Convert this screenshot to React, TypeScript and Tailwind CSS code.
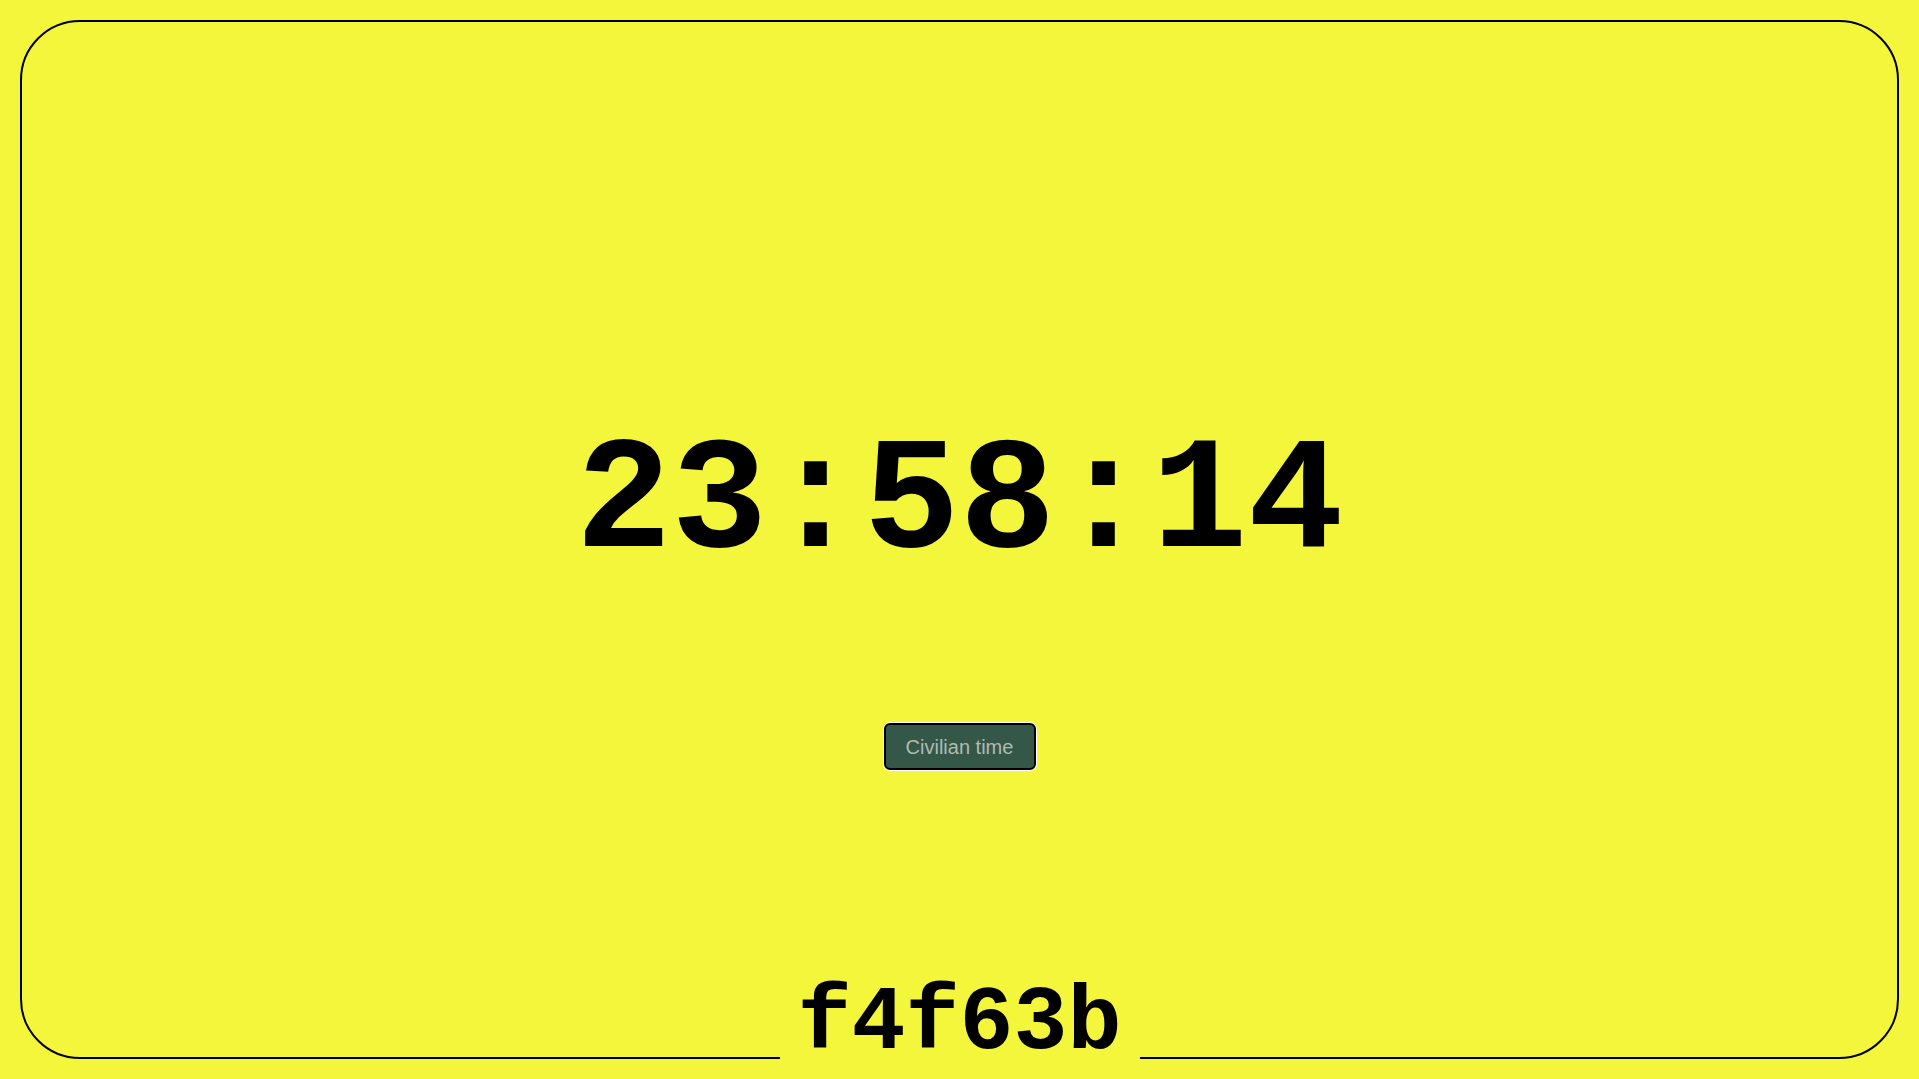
import React from "react";

export default function App() {
  const time = "23:58:14";
  const hex = "f4f63b";

  return (
    <div className="w-screen h-screen bg-[#f4f63b] p-5">
      <div className="relative h-full w-full rounded-[60px] border-2 border-black flex flex-col items-center">
        {/* Clock */}
        <div className="mt-[402px] h-[160px] flex items-center justify-center">
          <span className="font-['Courier_New','Liberation_Mono',monospace] font-bold text-[160px] leading-none text-black">
            {time}
          </span>
        </div>

        {/* Toggle */}
        <button className="mt-[139px] h-[47px] w-[152px] rounded-md border-2 border-black bg-[#345747] shadow-[0_0_0_1px_white] font-['Liberation_Sans',Arial,sans-serif] text-[20px] text-[#b1bab4]">
          Civilian time
        </button>

        {/* Colour label sitting on the bottom border */}
        <div className="absolute bottom-[-12px] left-1/2 -translate-x-1/2 bg-[#f4f63b] px-[18px] font-['Courier_New','Liberation_Mono',monospace] font-bold text-[90px] leading-none text-black">
          {hex}
        </div>
      </div>
    </div>
  );
}
